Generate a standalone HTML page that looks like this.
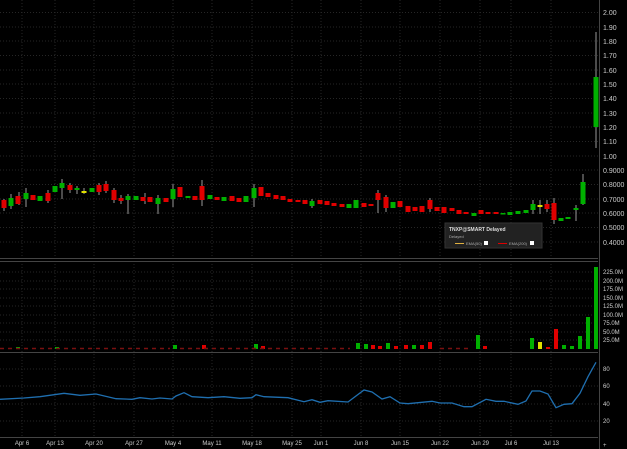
<!DOCTYPE html>
<html><head><style>
html,body{margin:0;padding:0;background:#000;}
svg{display:block;font-family:"Liberation Sans",sans-serif;}
</style></head><body>
<svg width="627" height="449" viewBox="0 0 627 449" xmlns="http://www.w3.org/2000/svg">
<rect width="627" height="449" fill="#000"/>
<g stroke="#262626" stroke-width="1" stroke-dasharray="1,2">
<line x1="22" y1="0" x2="22" y2="437"/><line x1="55" y1="0" x2="55" y2="437"/><line x1="94" y1="0" x2="94" y2="437"/><line x1="134" y1="0" x2="134" y2="437"/><line x1="173" y1="0" x2="173" y2="437"/><line x1="212" y1="0" x2="212" y2="437"/><line x1="252" y1="0" x2="252" y2="437"/><line x1="292" y1="0" x2="292" y2="437"/><line x1="321" y1="0" x2="321" y2="437"/><line x1="361" y1="0" x2="361" y2="437"/><line x1="400" y1="0" x2="400" y2="437"/><line x1="440" y1="0" x2="440" y2="437"/><line x1="480" y1="0" x2="480" y2="437"/><line x1="511" y1="0" x2="511" y2="437"/><line x1="551" y1="0" x2="551" y2="437"/>
<line x1="0" y1="12.5" x2="598" y2="12.5"/><line x1="0" y1="27" x2="598" y2="27"/><line x1="0" y1="41" x2="598" y2="41"/><line x1="0" y1="55.5" x2="598" y2="55.5"/><line x1="0" y1="70" x2="598" y2="70"/><line x1="0" y1="84" x2="598" y2="84"/><line x1="0" y1="98.5" x2="598" y2="98.5"/><line x1="0" y1="113" x2="598" y2="113"/><line x1="0" y1="127" x2="598" y2="127"/><line x1="0" y1="141.5" x2="598" y2="141.5"/><line x1="0" y1="156" x2="598" y2="156"/><line x1="0" y1="170" x2="598" y2="170"/><line x1="0" y1="184.5" x2="598" y2="184.5"/><line x1="0" y1="199" x2="598" y2="199"/><line x1="0" y1="213" x2="598" y2="213"/><line x1="0" y1="227.5" x2="598" y2="227.5"/><line x1="0" y1="242" x2="598" y2="242"/>
<line x1="0" y1="272" x2="598" y2="272"/><line x1="0" y1="281" x2="598" y2="281"/><line x1="0" y1="289" x2="598" y2="289"/><line x1="0" y1="298" x2="598" y2="298"/><line x1="0" y1="306" x2="598" y2="306"/><line x1="0" y1="315" x2="598" y2="315"/><line x1="0" y1="323" x2="598" y2="323"/><line x1="0" y1="332" x2="598" y2="332"/><line x1="0" y1="340" x2="598" y2="340"/>
<line x1="0" y1="369" x2="598" y2="369"/><line x1="0" y1="386" x2="598" y2="386"/><line x1="0" y1="404" x2="598" y2="404"/><line x1="0" y1="421" x2="598" y2="421"/>
</g>
<g stroke="#444" stroke-width="1">
<line x1="0" y1="258.5" x2="598" y2="258.5"/><line x1="0" y1="261.5" x2="598" y2="261.5"/><line x1="0" y1="352.5" x2="598" y2="352.5"/><line x1="0" y1="437.5" x2="598" y2="437.5"/>
<line x1="599.5" y1="0" x2="599.5" y2="449"/>
</g>
<g stroke="#999" stroke-width="1">
<path d="M4 199V211M11 194V209M19 192V205M26 188V207M48 190V203M62 179V199M70 183V193M77 186V194M84 188V194M128 194V214M145 193V204M158 195V214M173 184V207M202 180V206M254 184V207M378 190V213M386 195V212M554 198V224M576 205V221M583 174V205M596 32V148M533 200V214M540 200V214M547 200V212M430 198V212M312 199V208M99 183V195M114 188V203M106 181V193M121 195V204"/>
</g>
<g fill="#e00000">
<rect x="1.5" y="200" width="5" height="8"/><rect x="15.5" y="196" width="5" height="8"/><rect x="30.5" y="195" width="5" height="5"/><rect x="45.5" y="193" width="5" height="8"/><rect x="67.5" y="185" width="5" height="5"/><rect x="96.5" y="185" width="5" height="7"/><rect x="103.5" y="184" width="5" height="7"/><rect x="111.5" y="190" width="5" height="10"/><rect x="118.5" y="198" width="5" height="3"/><rect x="140.5" y="197" width="5" height="4"/><rect x="147.5" y="197" width="5" height="5"/><rect x="163.5" y="198" width="5" height="4"/><rect x="177.5" y="187" width="5" height="10"/><rect x="192.5" y="196" width="5" height="4"/><rect x="199.5" y="186" width="5" height="14"/><rect x="214.5" y="197" width="5" height="3"/><rect x="229.5" y="196" width="5" height="5"/><rect x="236.5" y="198" width="5" height="4"/><rect x="258.5" y="187" width="5" height="9"/><rect x="265.5" y="193" width="5" height="4"/><rect x="273.5" y="195" width="5" height="4"/><rect x="280.5" y="196" width="5" height="4"/><rect x="287.5" y="199" width="5" height="3"/><rect x="295.5" y="200" width="5" height="2"/><rect x="302.5" y="200" width="5" height="4"/><rect x="317.5" y="200" width="5" height="4"/><rect x="324.5" y="201" width="5" height="4"/><rect x="331.5" y="203" width="5" height="3"/><rect x="339.5" y="204" width="5" height="3"/><rect x="361.5" y="203" width="5" height="4"/><rect x="368.5" y="204" width="5" height="2"/><rect x="375.5" y="193" width="5" height="7"/><rect x="383.5" y="197" width="5" height="11"/><rect x="397.5" y="201" width="5" height="6"/><rect x="405.5" y="206" width="5" height="6"/><rect x="412.5" y="207" width="5" height="4"/><rect x="419.5" y="206" width="5" height="6"/><rect x="427.5" y="200" width="5" height="9"/><rect x="434.5" y="207" width="5" height="4"/><rect x="441.5" y="207" width="5" height="6"/><rect x="449.5" y="208" width="5" height="3"/><rect x="456.5" y="210" width="5" height="4"/><rect x="463.5" y="212" width="5" height="2"/><rect x="478.5" y="210" width="5" height="4"/><rect x="485.5" y="212" width="5" height="2"/><rect x="493.5" y="212" width="5" height="2"/><rect x="544.5" y="204" width="5" height="5"/><rect x="551.5" y="203" width="5" height="17"/>
</g>
<g fill="#00b000">
<rect x="8.5" y="198" width="5" height="8"/><rect x="23.5" y="193" width="5" height="6"/><rect x="37.5" y="196" width="5" height="5"/><rect x="52.5" y="186" width="5" height="6"/><rect x="59.5" y="183" width="5" height="5"/><rect x="74.5" y="188" width="5" height="2"/><rect x="89.5" y="188" width="5" height="4"/><rect x="125.5" y="196" width="5" height="4"/><rect x="133.5" y="196" width="5" height="4"/><rect x="155.5" y="198" width="5" height="6"/><rect x="170.5" y="189" width="5" height="10"/><rect x="185.5" y="196" width="5" height="2"/><rect x="207.5" y="195" width="5" height="4"/><rect x="221.5" y="197" width="5" height="4"/><rect x="243.5" y="196" width="5" height="6"/><rect x="251.5" y="188" width="5" height="10"/><rect x="309.5" y="201" width="5" height="5"/><rect x="346.5" y="204" width="5" height="4"/><rect x="353.5" y="200" width="5" height="8"/><rect x="390.5" y="202" width="5" height="6"/><rect x="471.5" y="213" width="5" height="3"/><rect x="500.5" y="213" width="5" height="1.5"/><rect x="507.5" y="212" width="5" height="3"/><rect x="515.5" y="211" width="5" height="3"/><rect x="523.5" y="210" width="5" height="3"/><rect x="530.5" y="204" width="5" height="6"/><rect x="558.5" y="218" width="5" height="3"/><rect x="565.5" y="217" width="5" height="2"/><rect x="573.5" y="208" width="5" height="2"/><rect x="580.5" y="182" width="5" height="22"/><rect x="593.5" y="77" width="5" height="50"/>
</g>
<rect x="81.5" y="191" width="5" height="2" fill="#e0e000"/><rect x="537.5" y="205" width="5" height="2" fill="#e0e000"/>
<g fill="#00b000">
<rect x="16" y="347" width="4" height="2"/><rect x="55" y="347" width="4" height="2"/><rect x="173" y="345" width="4" height="4"/><rect x="254" y="344" width="4" height="5"/><rect x="356" y="343" width="4" height="6"/><rect x="364" y="344" width="4" height="5"/><rect x="386" y="343" width="4" height="6"/><rect x="412" y="345" width="4" height="4"/><rect x="476" y="335" width="4" height="14"/><rect x="530" y="338" width="4" height="11"/><rect x="562" y="345" width="4" height="4"/><rect x="570" y="346" width="4" height="3"/><rect x="578" y="336" width="4" height="13"/><rect x="586" y="317" width="4" height="32"/><rect x="594" y="267" width="4" height="82"/>
</g>
<g fill="#e00000">
<rect x="202" y="345" width="4" height="4"/><rect x="261" y="346" width="4" height="3"/><rect x="371" y="345" width="4" height="4"/><rect x="378" y="346" width="4" height="3"/><rect x="394" y="346" width="4" height="3"/><rect x="404" y="345" width="4" height="4"/><rect x="420" y="345" width="4" height="4"/><rect x="428" y="342" width="4" height="7"/><rect x="483" y="346" width="4" height="3"/><rect x="546" y="347" width="4" height="2"/><rect x="554" y="329" width="4" height="20"/>
</g>
<rect x="538" y="342" width="4" height="7" fill="#e0e000"/>
<path d="M0 348.5H170M180 348.5H350M440 348.5H470" stroke="#7a1010" stroke-width="1.5" stroke-dasharray="4,4"/>
<polyline fill="none" stroke="#1f6fb0" stroke-width="1.3" points="0,399.3 24,398 40,396.7 64,393.3 80,395.3 96,394 116,398.7 132,399.3 140,397.7 152,399 160,398 172,399 176,396 184,392.7 192,396.7 208,397.7 224,396.7 240,398.3 252,397.7 256,394.7 264,396.7 288,397.7 304,401.7 312,399.7 320,402.3 328,400.7 348,402 364,390 372,392 382,399 390,396.7 400,403 408,403.7 432,401.3 440,403 452,403 464,406.7 472,406.7 486,399.3 496,401.3 504,401.3 518,404.3 526,401 532,391 540,391 548,394 556,407.7 564,404.3 572,403.7 580,393.3 588,376.7 596,362.3"/>
<rect x="445" y="223" width="97" height="25" fill="#222" stroke="#333"/>
<text x="449" y="231" font-size="5" font-weight="bold" fill="#ddd">TNXP@SMART Delayed</text>
<text x="449" y="238" font-size="4" fill="#aaa">Delayed</text>
<line x1="455" y1="243.5" x2="464" y2="243.5" stroke="#e0b040" stroke-width="1"/>
<text x="466" y="245" font-size="4" fill="#aaa">EMA(50)</text>
<rect x="484" y="241" width="4" height="4" fill="#fff"/>
<line x1="498" y1="243.5" x2="507" y2="243.5" stroke="#d00" stroke-width="1"/>
<text x="509" y="245" font-size="4" fill="#aaa">EMA(200)</text>
<rect x="530" y="241" width="4" height="4" fill="#fff"/>
<g font-size="7" fill="#ccc">
<text x="603" y="15">2.00</text><text x="603" y="30">1.90</text><text x="603" y="44">1.80</text><text x="603" y="58">1.70</text><text x="603" y="73">1.60</text><text x="603" y="87">1.50</text><text x="603" y="101">1.40</text><text x="603" y="116">1.30</text><text x="603" y="130">1.20</text><text x="603" y="144">1.10</text><text x="603" y="159">1.00</text>
<text x="603" y="173">0.9000</text><text x="603" y="187">0.8000</text><text x="603" y="202">0.7000</text><text x="603" y="216">0.6000</text><text x="603" y="230">0.5000</text><text x="603" y="245">0.4000</text>
</g>
<g font-size="6" fill="#ccc">
<text x="603" y="274">225.0M</text><text x="603" y="283">200.0M</text><text x="603" y="291">175.0M</text><text x="603" y="300">150.0M</text><text x="603" y="308">125.0M</text><text x="603" y="317">100.0M</text><text x="603" y="325">75.0M</text><text x="603" y="334">50.0M</text><text x="603" y="342">25.0M</text>
<text x="603" y="371">80</text><text x="603" y="388">60</text><text x="603" y="406">40</text><text x="603" y="423">20</text>
<text x="603" y="447">+</text>
</g>
<g font-size="6" fill="#ccc" text-anchor="middle">
<text x="22" y="445">Apr 6</text><text x="55" y="445">Apr 13</text><text x="94" y="445">Apr 20</text><text x="134" y="445">Apr 27</text><text x="173" y="445">May 4</text><text x="212" y="445">May 11</text><text x="252" y="445">May 18</text><text x="292" y="445">May 25</text><text x="321" y="445">Jun 1</text><text x="361" y="445">Jun 8</text><text x="400" y="445">Jun 15</text><text x="440" y="445">Jun 22</text><text x="480" y="445">Jun 29</text><text x="511" y="445">Jul 6</text><text x="551" y="445">Jul 13</text>
</g>
</svg>
</body></html>
